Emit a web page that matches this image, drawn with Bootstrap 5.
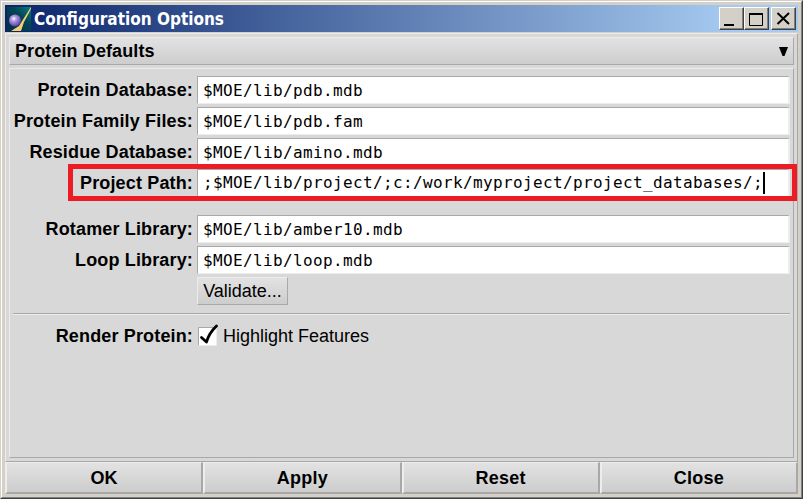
<!DOCTYPE html>
<html lang="en">
<head>
<meta charset="utf-8">
<meta name="viewport" content="width=device-width, initial-scale=1">
<title>Configuration Options</title>
<link href="https://cdn.jsdelivr.net/npm/bootstrap@5.3.0/dist/css/bootstrap.min.css" rel="stylesheet">
<style>
body { margin: 0; overflow: hidden; font-family: "Liberation Sans", Arial, sans-serif; font-size: 18px; line-height: 20px; color: #000; }
.window-frame { width: 803px; height: 499px; background: #d4d0c8; border: 1px solid #d4d0c8; border-right-color: #404040; border-bottom-color: #404040; }
.window-inner { border: 1px solid #fff; border-right-color: #808080; border-bottom-color: #808080; padding: 3px; }
.title-bar { height: 27px; background: linear-gradient(90deg, #0a246a, #a6caf0 92%); padding: 0 2px; margin-bottom: 1px; }
.title-text { font: bold 17px/26px "DejaVu Sans Condensed", "DejaVu Sans", sans-serif; font-stretch: condensed; color: #fff; margin-left: 3px; white-space: nowrap; }
.cap-btn { width: 25px; height: 23px; padding: 0; background: #d4d0c8; border: 1px solid #fff; border-right-color: #404040; border-bottom-color: #404040; box-shadow: inset -1px -1px #808080; }
.cap-btn svg { display: block; }
.cap-max { margin-right: 2px; }
.client { height: 429px; background: #d8d8d8; border: 1px solid #ededed; border-right-color: #a8a8a8; border-bottom-color: #a8a8a8; padding: 3px; }
.section-head { height: 28px; background: linear-gradient(#e2e2e2, #cdcdcd); border: 1px solid #ebebeb; border-right-color: #a8a8a8; border-bottom-color: #a8a8a8; padding: 0 5px; margin-bottom: 3px; letter-spacing: .1px; }
.form-frame { height: 390px; border: 1px solid #ebebeb; border-right-color: #a8a8a8; border-bottom-color: #a8a8a8; padding: 7px 3px 0; }
.form-line { height: 28px; margin-bottom: 3px; }
.line-gap { margin-bottom: 18px; }
.line-label { width: 180px; margin-right: 4px; font-weight: 700; letter-spacing: .15px; text-align: right; white-space: nowrap; flex: none; }
.path-field { height: 28px; background: #fff; border: 1px solid #a8a8a8; border-right: 2px solid #ededed; border-bottom: 1px solid #ededed; padding-left: 5px; font: 16px/28px "DejaVu Sans Mono", monospace; letter-spacing: .367px; white-space: pre; }
.caret { width: 2px; height: 22px; background: #000; }
.highlight-box { left: 55px; top: -5px; width: 729px; height: 37px; border: 5px solid #ed1c24; pointer-events: none; }
.validate-btn { width: 91px; height: 28px; padding: 0; border: 1px solid #ebebeb; border-right-color: #a8a8a8; border-bottom-color: #a8a8a8; background: linear-gradient(#e2e2e2, #cdcdcd); }
.rule { height: 2px; background: #a8a8a8; border-bottom: 1px solid #ededed; margin: 8px 0 7px; }
.check-art { width: 22px; height: 24px; }
.action { height: 32px; padding: 0; font-weight: 700; letter-spacing: .2px; background: linear-gradient(#e2e2e2, #cdcdcd); border: 1px solid #ededed; border-left-width: 2px; border-right: 2px solid #a8a8a8; border-bottom: 2px solid #a8a8a8; }
</style>
<script src="https://cdn.jsdelivr.net/npm/bootstrap@5.3.0/dist/js/bootstrap.bundle.min.js"></script>
</head>
<body>
<div class="window-frame">
<div class="window-inner h-100">
  <header class="title-bar d-flex align-items-center">
    <svg class="flex-shrink-0" width="24" height="24" viewBox="0 0 24 24" aria-hidden="true">
      <defs>
        <linearGradient id="tile" x1="0" y1="1" x2="1" y2="0"><stop offset="0" stop-color="#032c43"/><stop offset=".6" stop-color="#034555"/><stop offset="1" stop-color="#058080"/></linearGradient>
        <radialGradient id="ball" cx=".4" cy=".35" r=".65"><stop offset="0" stop-color="#fff"/><stop offset=".3" stop-color="#b6a0e4"/><stop offset="1" stop-color="#5440a8"/></radialGradient>
      </defs>
      <path fill="url(#tile)" d="M0 0h24v24H0z"/>
      <path fill="#f5cf72" d="M24 0v2L17 15l-3 9H4l8-5 5-8z"/>
      <circle cx="8" cy="13.500" r="6" fill="url(#ball)"/>
    </svg>
    <span class="title-text">Configuration Options</span>
    <div class="d-flex ms-auto">
      <button class="cap-btn" aria-label="Minimize"><svg width="23" height="21"><path d="M4 17h10" stroke="#000" stroke-width="2"/></svg></button>
      <button class="cap-btn cap-max" aria-label="Maximize"><svg width="23" height="21"><path d="M4.500 5v12.500h13V5" fill="none" stroke="#000"/><path d="M4 6h14" stroke="#000" stroke-width="2"/></svg></button>
      <button class="cap-btn" aria-label="Close"><svg width="23" height="21"><path d="M5.500 5l11.500 11M17 5L5.500 16" stroke="#000" stroke-width="2"/></svg></button>
    </div>
  </header>
  <main class="client">
    <div class="section-head d-flex align-items-center justify-content-between">
      <span class="fw-bold">Protein Defaults</span>
      <svg width="9" height="9" aria-hidden="true"><path d="M0 0h9L5.500 9h-2z"/></svg>
    </div>
    <div class="form-frame">
      <div class="form-line d-flex align-items-center"><label class="line-label">Protein Database:</label><div class="path-field flex-grow-1">$MOE/lib/pdb.mdb</div></div>
      <div class="form-line d-flex align-items-center"><label class="line-label">Protein Family Files:</label><div class="path-field flex-grow-1">$MOE/lib/pdb.fam</div></div>
      <div class="form-line d-flex align-items-center"><label class="line-label">Residue Database:</label><div class="path-field flex-grow-1">$MOE/lib/amino.mdb</div></div>
      <div class="form-line line-gap position-relative d-flex align-items-center"><label class="line-label">Project Path:</label><div class="path-field flex-grow-1 d-flex align-items-center">;$MOE/lib/project/;c:/work/myproject/project_databases/;<span class="caret"></span></div><div class="highlight-box position-absolute"></div></div>
      <div class="form-line d-flex align-items-center"><label class="line-label">Rotamer Library:</label><div class="path-field flex-grow-1">$MOE/lib/amber10.mdb</div></div>
      <div class="form-line d-flex align-items-center"><label class="line-label">Loop Library:</label><div class="path-field flex-grow-1">$MOE/lib/loop.mdb</div></div>
      <div class="form-line d-flex"><span class="line-label"></span><button class="validate-btn">Validate...</button></div>
      <div class="rule"></div>
      <div class="form-line d-flex align-items-center"><label class="line-label">Render Protein:</label>
        <svg class="check-art" viewBox="0 0 22 24" role="img" aria-label="Checked"><path fill="#fff" d="M2 4h17v17H2z"/><path fill="none" stroke="#a8a8a8" d="M1.500 21V3.500H19"/><path fill="none" stroke="#ededed" d="M2 21.500h17.500V4"/><path fill="none" stroke="#000" stroke-width="2.800" stroke-linejoin="round" stroke-linecap="round" d="M4.500 13.500l5 4.500Q12 9 19.500 2"/></svg>
        <span class="ms-1">Highlight Features</span></div>
    </div>
  </main>
  <footer class="row g-0">
    <div class="col-3"><button class="action w-100">OK</button></div>
    <div class="col-3"><button class="action w-100">Apply</button></div>
    <div class="col-3"><button class="action w-100">Reset</button></div>
    <div class="col-3"><button class="action w-100">Close</button></div>
  </footer>
</div>
</div>
</body>
</html>
